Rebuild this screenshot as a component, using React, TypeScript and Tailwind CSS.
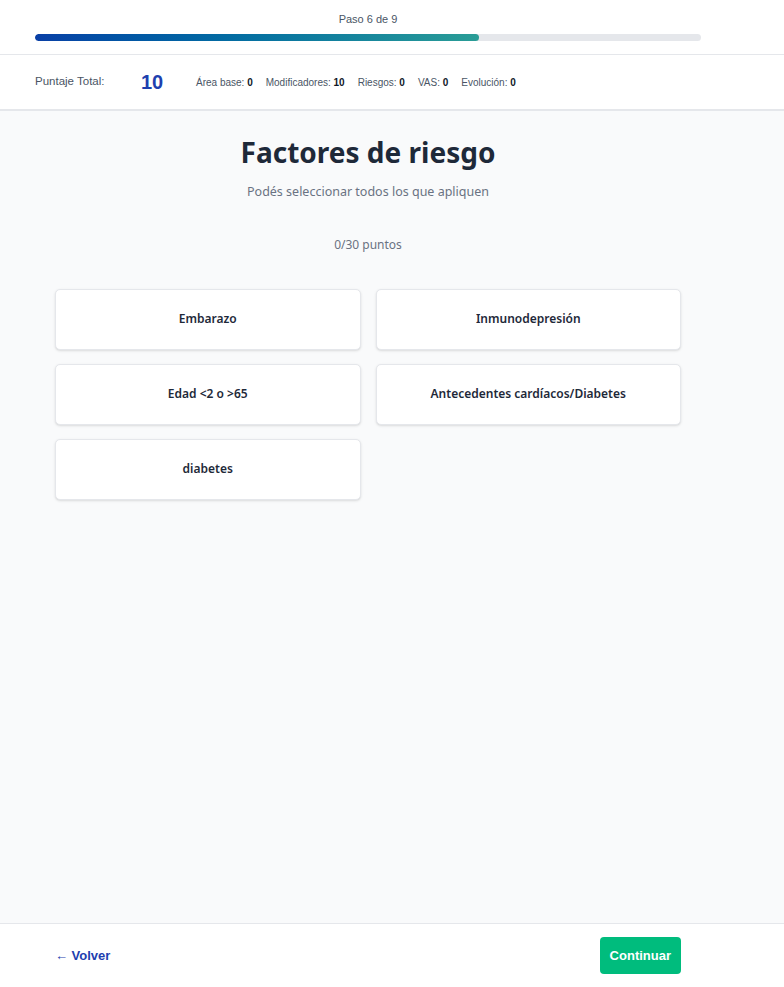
import React, { useState } from 'react';

const RISKS = [
  'Embarazo',
  'Inmunodepresión',
  'Edad <2 o >65',
  'Antecedentes cardíacos/Diabetes',
  'diabetes',
];

const arial = "font-['Liberation_Sans',Arial,sans-serif]";

export default function App() {
  const [selected, setSelected] = useState<string[]>([]);

  const toggle = (r: string) =>
    setSelected(prev => (prev.includes(r) ? prev.filter(x => x !== r) : [...prev, r]));

  return (
    <div className="min-h-[987px] flex flex-col bg-gray-50 font-['Noto_Sans',sans-serif]">
      <div className="bg-white border-b border-gray-200">
        <div className="w-[736px] px-[35px] pt-[11px] pb-[13px]">
          <p className={`${arial} text-center text-[11px] text-gray-600 leading-4`}>Paso 6 de 9</p>
          <div className="mt-[7px] h-[7px] w-full rounded-full bg-gray-200 overflow-hidden">
            <div className="h-full rounded-full bg-gradient-to-r from-[#0a3fa6] to-[#2a9d96]" style={{ width: `${(6 / 9) * 100}%` }} />
          </div>
        </div>
      </div>

      <div className="bg-white border-b-2 border-gray-200">
        <div className={`${arial} w-[736px] px-[35px] h-[54px] flex items-center`}>
          <span className="text-[11.5px] font-medium text-gray-600 w-[106px]">Puntaje Total:</span>
          <span className="text-[20px] font-bold text-[#1e40af] w-[55px]">10</span>
          <div className="flex items-center gap-[13px] text-[10px] text-gray-600">
            <span>Área base: <b className="text-gray-900">0</b></span>
            <span>Modificadores: <b className="text-gray-900">10</b></span>
            <span>Riesgos: <b className="text-gray-900">0</b></span>
            <span>VAS: <b className="text-gray-900">0</b></span>
            <span>Evolución: <b className="text-gray-900">0</b></span>
          </div>
        </div>
      </div>

      <main className="flex-1">
        <div className="w-[736px] px-[55px] pt-[21px]">
          <h1 className="text-center text-[28px] font-bold text-gray-800 leading-[40px]">Factores de riesgo</h1>
          <p className="mt-[11px] text-center text-[12.5px] text-gray-500">Podés seleccionar todos los que apliquen</p>
          <p className="mt-[34px] text-center text-[12px] text-gray-500">{selected.length * 0}/30 puntos</p>

          <div className="mt-[35px] grid grid-cols-2 gap-x-[15px] gap-y-[14px] w-[626px]">
            {RISKS.map(r => (
              <button
                key={r}
                onClick={() => toggle(r)}
                className={`h-[61px] rounded-[5px] border bg-white shadow-sm text-[12px] font-semibold text-gray-800 ${
                  selected.includes(r) ? 'border-[#1e40af]' : 'border-gray-200'
                }`}
              >
                {r}
              </button>
            ))}
          </div>
        </div>
      </main>

      <footer className="bg-white border-t border-gray-200 h-[64px]">
        <div className={`${arial} w-[736px] px-[55px] h-full flex items-center justify-between`}>
          <button className="text-[13px] font-bold text-[#1e40af]">← Volver</button>
          <button className="h-[37px] px-[10px] rounded-[4px] bg-emerald-500 text-white text-[13px] font-bold">Continuar</button>
        </div>
      </footer>
    </div>
  );
}
